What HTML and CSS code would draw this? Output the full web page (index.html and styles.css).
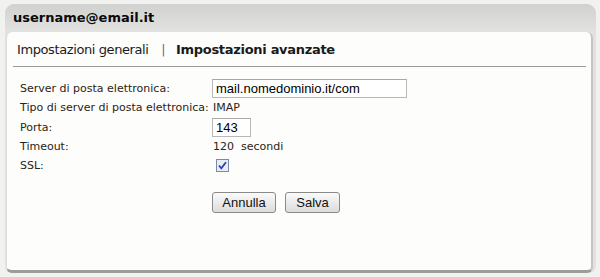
FILE: index.html
```html
<!DOCTYPE html>
<html lang="it">
<head>
    <meta charset="UTF-8">
    <title>Impostazioni avanzate</title>
    <link rel="stylesheet" href="styles.css">
</head>
<body>
    <div class="window">
        <div class="header">username@email.it</div>
        <div class="panel">
            <div class="tabs">
                <span class="tab">Impostazioni generali</span>
                <span class="sep">|</span>
                <span class="tab active">Impostazioni avanzate</span>
            </div>
            <div class="form">
                <div class="row">
                    <label>Server di posta elettronica:</label>
                    <input type="text" class="field wide" value="mail.nomedominio.it/com">
                </div>
                <div class="row plain">
                    <label>Tipo di server di posta elettronica:</label>
                    <span class="value">IMAP</span>
                </div>
                <div class="row">
                    <label>Porta:</label>
                    <input type="text" class="field short" value="143">
                </div>
                <div class="row plain">
                    <label>Timeout:</label>
                    <span class="value">120&nbsp; secondi</span>
                </div>
                <div class="row plain">
                    <label>SSL:</label>
                    <span class="check">
                        <svg width="13" height="13" viewBox="0 0 13 13">
                            <rect x="0.5" y="0.5" width="12" height="12" fill="#e8ecf4" stroke="#7a8aa8"/>
                            <path d="M3 6.5 L5.3 9.3 L10 3.3" fill="none" stroke="#2a3fb8" stroke-width="1.8"/>
                        </svg>
                    </span>
                </div>
                <div class="buttons">
                    <button class="cancel">Annulla</button>
                    <button class="save">Salva</button>
                </div>
            </div>
        </div>
    </div>
</body>
</html>
```

FILE: styles.css
```css
body {
    margin: 0;
    padding: 4px 4px 0 5px;
    background-color: #f1f1ef;
    font-family: 'DejaVu Sans', Verdana, sans-serif;
    color: #1a1a1a;
}
.window {
    height: 269px;
    border-radius: 9px 9px 7px 7px;
    background: linear-gradient(#d1d1cf, #e2e2e0 28px);
    display: flex;
    flex-direction: column;
}
.header {
    height: 28px;
    line-height: 28px;
    padding-left: 8px;
    font-size: 13px;
    font-weight: bold;
    color: #0a0a0a;
}
.panel {
    flex: 1;
    margin: 0 3px 0 1px;
    background-color: #fdfdfb;
    border-radius: 6px;
    border-left: 1px solid #dcdcda;
    border-right: 2px solid #c4c4c2;
    border-bottom: 3px solid #9c9c9a;
}
.tabs {
    margin: 0 5px 0 6px;
    height: 34px;
    line-height: 36px;
    padding-left: 4px;
    font-size: 13px;
    letter-spacing: -0.4px;
    border-bottom: 1px solid #9a9a98;
}
.sep {
    margin: 0 7px 0 9px;
    color: #8c5e80;
}
.active {
    font-weight: bold;
    letter-spacing: -0.3px;
}
.form {
    padding: 11px 0 0 13px;
    font-size: 11px;
    color: #2a2418;
}
.row {
    display: flex;
    align-items: center;
    height: 20px;
}
.row.plain {
    height: 19px;
}
.row label {
    width: 192px;
    flex: none;
}
.field {
    box-sizing: border-box;
    height: 19px;
    border: 1px solid #b8b8b8;
    border-top-color: #a8a8a8;
    padding: 1px 3px 0;
    font-family: 'Liberation Sans', Arial, sans-serif;
    font-size: 13px;
    color: #000;
    background: #fff;
}
.wide {
    width: 195px;
}
.short {
    width: 39px;
}
.value {
    padding-left: 1px;
}
.check {
    display: flex;
    padding-left: 4px;
}
.buttons {
    display: flex;
    gap: 9px;
    margin: 17px 0 0 192px;
}
button {
    height: 21px;
    padding: 0;
    font-family: 'Liberation Sans', Arial, sans-serif;
    font-size: 13px;
    color: #111;
    background: linear-gradient(#fafafa, #dcdcdc);
    border: 1px solid #8a8a8a;
    border-radius: 3px;
}
.cancel {
    width: 64px;
}
.save {
    width: 55px;
}
```
